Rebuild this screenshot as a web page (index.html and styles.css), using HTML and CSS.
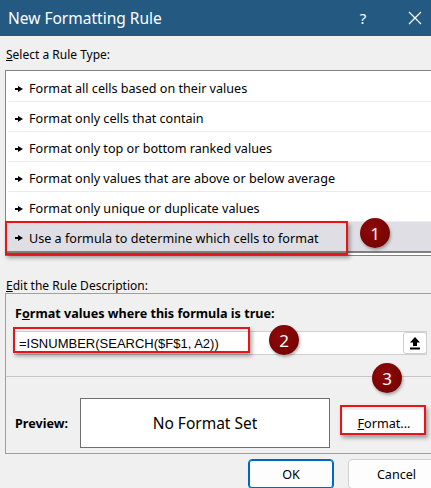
FILE: index.html
```html
<!DOCTYPE html>
<html>
<head>
<meta charset="utf-8">
<link rel="stylesheet" href="styles.css">
</head>
<body>
<div class="dialog">
  <div class="titlebar">
    <span class="title">New Formatting Rule</span>
    <span class="help">?</span>
    <span class="close"><svg width="14" height="14" viewBox="0 0 14 14"><path d="M1 1L13 13M13 1L1 13" stroke="#fff" stroke-width="1.2"/></svg></span>
  </div>
  <div class="body">
    <div class="label label-top"><u>S</u>elect a Rule Type:</div>
    <div class="listbox">
      <div class="row"><span class="arrow"></span>Format all cells based on their values</div>
      <div class="row"><span class="arrow"></span>Format only cells that contain</div>
      <div class="row"><span class="arrow"></span>Format only top or bottom ranked values</div>
      <div class="row"><span class="arrow"></span>Format only values that are above or below average</div>
      <div class="row"><span class="arrow"></span>Format only unique or duplicate values</div>
      <div class="row selected"><span class="arrow"></span>Use a formula to determine which cells to format</div>
    </div>
    <div class="label label-edit"><u>E</u>dit the Rule Description:</div>
    <div class="descbox">
      <div class="desc-title">F<u>o</u>rmat values where this formula is true:</div>
      <div class="formula">
        <span class="formula-text">=ISNUMBER(SEARCH($F$1, A2))</span>
        <span class="collapse"><svg width="12" height="14" viewBox="0 0 12 14"><path d="M6 1L1 6.5H4V10H8V6.5H11Z" fill="#000"/><rect x="1" y="11.5" width="10" height="2" fill="#000"/></svg></span>
      </div>
      <div class="sep"></div>
      <div class="preview-row">
        <span class="preview-label">Preview:</span>
        <div class="preview-box">No Format Set</div>
        <div class="btn format-btn"><u>F</u>ormat...</div>
      </div>
    </div>
    <div class="buttons">
      <div class="btn ok">OK</div>
      <div class="btn cancel">Cancel</div>
    </div>
  </div>

  <div class="redbox rb1"></div>
  <div class="redbox rb2"></div>
  <div class="redbox rb3"></div>
  <div class="badge b1">1</div>
  <div class="badge b2">2</div>
  <div class="badge b3">3</div>
</div>
</body>
</html>
```

FILE: styles.css
```css
* { box-sizing: border-box; }
html, body { margin: 0; padding: 0; }
body {
  width: 431px;
  height: 488px;
  overflow: hidden;
  background: #f0f0f0;
  font-family: "Noto Sans", "Open Sans", sans-serif;
  font-size: 12px;
  color: #000;
}
.dialog {
  position: relative;
  width: 431px;
  height: 488px;
  overflow: hidden;
}
.titlebar {
  height: 36px;
  background: #245a82;
  color: #fff;
  display: flex;
  align-items: center;
  padding-left: 8px;
}
.title {
  font-size: 15.5px;
  flex: 1;
}
.help {
  font-size: 15px;
  width: 40px;
  text-align: center;
  margin-right: 12px;
}
.close {
  width: 36px;
  display: flex;
  justify-content: center;
  padding-left: 4px;
}
.body {
  padding-left: 5px;
}
.label {
  display: flex;
  align-items: center;
  padding-left: 1px;
}
.label-top { height: 34px; padding-top: 2px; }
.listbox {
  width: 440px;
  height: 186px;
  background: #fff;
  border: 1px solid #828282;
  border-right: none;
  padding: 1px 0 0 2px;
  display: flex;
  flex-direction: column;
}
.row {
  height: 30px;
  flex: none;
  display: flex;
  align-items: center;
  border-bottom: 1px solid #ececec;
  padding-left: 7px;
  padding-top: 4px;
  font-size: 12.6px;
}
.row.selected {
  background: #dedee4;
  margin-left: -2px;
  padding-left: 9px;
  padding-top: 3px;
  height: 31px;
  border-bottom: 2px solid #7f7f80;
}
.arrow {
  display: inline-block;
  width: 8px;
  height: 6px;
  margin-right: 6px;
  position: relative;
}
.arrow::before {
  content: "";
  position: absolute;
  left: 0; top: 2px;
  width: 4px; height: 2px;
  background: #000;
}
.arrow::after {
  content: "";
  position: absolute;
  left: 3px; top: 0;
  border-left: 5px solid #000;
  border-top: 3px solid transparent;
  border-bottom: 3px solid transparent;
}
.label-edit { height: 37px; padding-top: 21px; }
.descbox {
  width: 440px;
  height: 161px;
  border: 1px solid #a0a0a0;
  border-right: none;
  display: flex;
  flex-direction: column;
}
.desc-title {
  font-weight: bold;
  padding: 11px 0 0 9px;
  height: 37px;
  font-size: 12.6px;
}
.formula {
  margin-left: 8px;
  width: 413px;
  height: 24px;
  background: #fff;
  border: 1px solid #d0d0d0;
  display: flex;
  align-items: center;
  justify-content: space-between;
  padding-left: 4px;
}
.formula-text {
  font-family: "Liberation Sans", Arial, sans-serif;
  font-size: 13px;
}
.collapse {
  width: 24px;
  height: 22px;
  border: 1px solid #cfcfcf;
  border-radius: 3px;
  display: flex;
  align-items: center;
  justify-content: center;
  margin-right: -1px;
}
.sep {
  margin-top: 21px;
  height: 1px;
  background: #c6c6c6;
}
.preview-row {
  display: flex;
  align-items: center;
  padding: 21px 0 0 9px;
}
.preview-label {
  font-weight: bold;
  width: 65px;
  font-size: 12.6px;
}
.preview-box {
  width: 250px;
  height: 50px;
  background: #fff;
  border: 1px solid #6e6e6e;
  display: flex;
  align-items: center;
  justify-content: center;
  font-size: 15.5px;
}
.btn {
  display: flex;
  align-items: center;
  justify-content: center;
  background: #fdfdfd;
  border: 1px solid #d0d0d0;
  border-radius: 4px;
  font-size: 12.6px;
}
.format-btn {
  margin-left: 13px;
  width: 82px;
  height: 26px;
  border-color: #fdfdfd;
}
.buttons {
  display: flex;
  justify-content: flex-end;
  gap: 14px;
  padding-top: 5px;
  margin-right: -14px;
}
.ok, .cancel {
  width: 86px;
  height: 30px;
}
.ok { border: 1px solid #0067c0; box-shadow: inset 0 0 0 1px #0067c0; }
.cancel { width: 97px; }
.redbox {
  position: absolute;
  border: 2px solid #e8141a;
  box-shadow: 2px 3px 4px rgba(0,0,0,0.35);
}
.rb1 { left: 5px; top: 221px; width: 343px; height: 34px; }
.rb2 { left: 13px; top: 327px; width: 237px; height: 26px; }
.rb3 { left: 340px; top: 405px; width: 86px; height: 30px; }
.badge {
  position: absolute;
  width: 30px;
  height: 30px;
  border-radius: 50%;
  background: radial-gradient(circle at 40% 35%, #8e0a0a, #6e0000);
  color: #fff;
  font-family: "Noto Sans", sans-serif;
  font-size: 17px;
  display: flex;
  align-items: center;
  justify-content: center;
  box-shadow: 1px 2px 3px rgba(0,0,0,0.3);
}
.b1 { left: 360px; top: 218px; }
.b2 { left: 269px; top: 325px; }
.b3 { left: 372px; top: 363px; }
```
